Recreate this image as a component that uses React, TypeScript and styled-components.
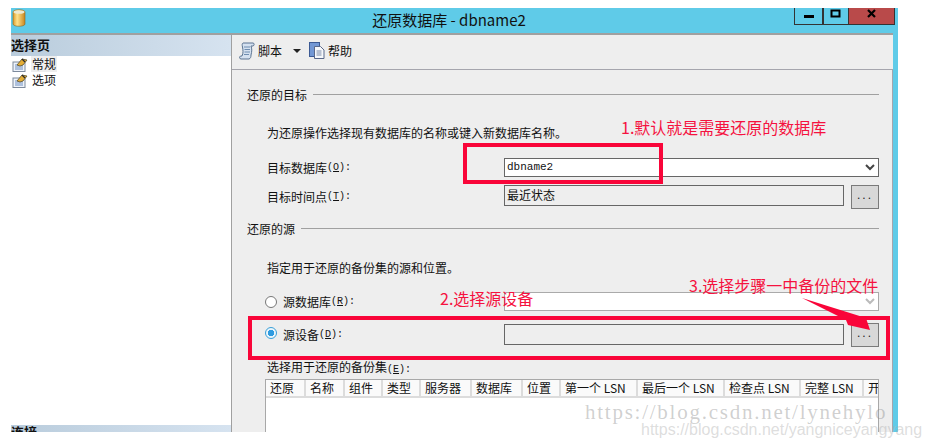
import React from "react";
import styled, { createGlobalStyle } from "styled-components";

const cjk = `"Noto Sans CJK SC", "Liberation Sans", sans-serif`;

const GlobalStyle = createGlobalStyle`
  html, body {
    margin: 0;
    padding: 0;
    background: #fff;
  }
  * {
    box-sizing: border-box;
  }
`;

const Page = styled.div`
  position: relative;
  width: 929px;
  height: 448px;
  overflow: hidden;
  padding: 8px 31px 16px 11px;
  font-family: ${cjk};
  font-size: 12px;
  color: #111;
`;

const Win = styled.div`
  display: flex;
  flex-direction: column;
  height: 100%;
  background: #5fcbe8;
  padding-right: 5px;
`;

const TitleBar = styled.div`
  position: relative;
  height: 25px;
  flex: none;
  display: flex;
  align-items: center;
  justify-content: center;
  padding: 0 6px 2px 0;
  font-size: 15px;
`;

const TitleIcon = styled.svg`
  position: absolute;
  left: 1px;
  top: 1px;
`;

const WinButtons = styled.div`
  position: absolute;
  right: -2px;
  top: 0;
  display: flex;
  height: 17px;
`;

const WinButton = styled.div<{ $w: number; $close?: boolean }>`
  width: ${(p) => p.$w}px;
  display: flex;
  align-items: flex-start;
  justify-content: center;
  border: 1px solid #333;
  border-top: none;
  border-left-width: ${(p) => (p.$close ? 0 : 1)}px;
  background: ${(p) => (p.$close ? "#b94a4a" : "transparent")};
`;

const Body = styled.div`
  flex: 1;
  min-height: 0;
  display: flex;
  border-top: 2px solid #a0a0a0;
  background: #eee;
`;

const Left = styled.div`
  width: 221px;
  flex: none;
  display: flex;
  flex-direction: column;
  background: #fff;
  border-right: 1px solid #a0a0a0;
`;

const SideHeader = styled.div<{ $clip?: boolean }>`
  height: ${(p) => (p.$clip ? 7 : 21)}px;
  flex: none;
  overflow: hidden;
  padding-top: ${(p) => (p.$clip ? 0 : 1)}px;
  font-size: 13px;
  line-height: ${(p) => (p.$clip ? 14 : 18)}px;
  font-weight: 700;
  background: linear-gradient(90deg, #b9ccdc, #d6e3f0);
`;

const Tree = styled.div`
  flex: 1;
`;

const TreeRow = styled.div`
  height: 16px;
  display: flex;
  align-items: center;
  padding-left: 1px;
  gap: 3px;
`;

const TreeText = styled.span<{ $sel?: boolean }>`
  padding: 0 1px;
  line-height: 16px;
  background: ${(p) => (p.$sel ? "#eeeeee" : "transparent")};
`;

const Right = styled.div`
  flex: 1;
  min-width: 0;
  display: flex;
  flex-direction: column;
`;

const Toolbar = styled.div`
  height: 35px;
  flex: none;
  display: flex;
  align-items: center;
  padding: 0 0 3px 7px;
  border-bottom: 1px solid #a5a5ad;
`;

const ToolItem = styled.span`
  display: flex;
  align-items: center;
  gap: 3px;
`;

const Caret = styled.i`
  width: 0;
  height: 0;
  margin: 1px 8px 0 11px;
  border: 4px solid transparent;
  border-top: 4px solid #222;
  border-bottom: none;
`;

const Form = styled.div`
  flex: 1;
  min-height: 0;
  overflow: hidden;
  padding: 15px 13px 0 15px;
  border-right: 1px solid #a5a5ad;
`;

const Section = styled.div<{ $top: number }>`
  display: flex;
  align-items: center;
  gap: 6px;
  height: 18px;
  margin-top: ${(p) => p.$top}px;
  &::after {
    content: "";
    flex: 1;
    height: 1px;
    background: #a0a0a0;
  }
`;

const Hint = styled.div<{ $top: number }>`
  margin: ${(p) => p.$top}px 0 0 20px;
  height: 16px;
  line-height: 16px;
`;

const Row = styled.div<{ $top: number; $h: number }>`
  display: flex;
  align-items: flex-start;
  height: ${(p) => p.$h}px;
  margin-top: ${(p) => p.$top}px;
  padding-left: 20px;
`;

const Label = styled.label<{ $w?: number; $pad?: number }>`
  flex: none;
  width: ${(p) => p.$w ?? 237}px;
  height: 19px;
  margin-top: ${(p) => p.$pad ?? 0}px;
  display: flex;
  align-items: center;
`;

const Mono = styled.span`
  font-family: "Liberation Mono", monospace;
  font-size: 11px;
`;

const Hotkey = styled.span`
  font-family: "Liberation Mono", monospace;
  font-size: 10px;
  white-space: pre;
  & > u {
    text-decoration: underline;
  }
`;

const Field = styled.div<{ $h: number; $bg: string; $light?: boolean; $pad?: number }>`
  flex: 1;
  min-width: 0;
  height: ${(p) => p.$h}px;
  margin-top: ${(p) => p.$pad ?? 0}px;
  display: flex;
  align-items: center;
  justify-content: space-between;
  padding: 0 1px 2px 2px;
  background: ${(p) => p.$bg};
  border: 1px solid ${(p) => (p.$light ? "#aaa" : "#666")};
`;

const Chevron = styled.svg`
  flex: none;
  margin: 2px 2px 0 0;
`;

const Browse = styled.button`
  flex: none;
  width: 28px;
  height: 24px;
  margin-left: 7px;
  padding: 0 0 4px;
  border: 1px solid #7a7a7a;
  background: #d8d8d8;
  font-family: "Liberation Sans", sans-serif;
  font-size: 12px;
  letter-spacing: 2px;
  color: #222;
`;

const Radio = styled.span<{ $on?: boolean }>`
  flex: none;
  width: 12px;
  height: 12px;
  margin: 4px 6px 0 -2px;
  border-radius: 50%;
  border: 1px solid ${(p) => (p.$on ? "#3a9fd8" : "#777")};
  background: ${(p) =>
    p.$on ? "radial-gradient(circle, #2f9be0 0 3px, #eaf5fb 3.5px)" : "#fff"};
`;

const Grid = styled.div`
  margin: 4px 0 0 18px;
  height: 53px;
  background: #fff;
  border: 1px solid #a8a8a8;
  border-bottom: none;
  overflow: hidden;
`;

const GridHead = styled.div`
  display: flex;
  height: 18px;
  border-bottom: 2px solid #dcdcdc;
  background: #fafafa;
`;

const GridCol = styled.div<{ $w: number }>`
  flex: none;
  width: ${(p) => p.$w}px;
  padding-left: 4px;
  line-height: 16px;
  white-space: nowrap;
  overflow: hidden;
  border-right: 2px solid #dcdcdc;
  &:last-child {
    border-right: none;
  }
`;

const RedBox = styled.div<{ $x: number; $y: number; $w: number; $h: number }>`
  position: absolute;
  left: ${(p) => p.$x}px;
  top: ${(p) => p.$y}px;
  width: ${(p) => p.$w}px;
  height: ${(p) => p.$h}px;
  border: 4px solid #f90539;
`;

const Note = styled.div<{ $x: number; $y: number }>`
  position: absolute;
  left: ${(p) => p.$x}px;
  top: ${(p) => p.$y}px;
  font-size: 16px;
  line-height: 20px;
  color: #f5123f;
  white-space: nowrap;
`;

const Arrow = styled.svg`
  position: absolute;
  left: 798px;
  top: 294px;
`;

const Mark = styled.div<{ $x: number; $y: number; $sans?: boolean }>`
  position: absolute;
  left: ${(p) => p.$x}px;
  top: ${(p) => p.$y}px;
  font-family: ${(p) =>
    p.$sans ? `"Liberation Sans", sans-serif` : `"Liberation Serif", serif`};
  font-size: ${(p) => (p.$sans ? 16 : 21)}px;
  letter-spacing: ${(p) => (p.$sans ? 0 : 1.75)}px;
  line-height: 18px;
  color: ${(p) => (p.$sans ? "rgba(180,180,180,.45)" : "rgba(130,130,130,.38)")};
  white-space: nowrap;
`;

const PageIcon = () => (
  <svg width="16" height="15" viewBox="0 0 16 15">
    <rect x="1" y="5" width="12" height="9.500" fill="#eef3fa" stroke="#7d8a9c" />
    <path d="M3 8h8M3 10h8M3 12h8" stroke="#6f8fc0" />
    <path d="M5 8 10 2l5 1-4 5-3 1z" fill="#e6ae35" stroke="#5c5330" strokeWidth=".8" />
    <path d="M10 2l3 3" stroke="#2b2b2b" strokeWidth="1.200" />
  </svg>
);

const ScriptIcon = () => (
  <svg width="16" height="18" viewBox="0 0 16 18">
    <path
      d="M4 1h10c1.500 0 1.500 2.500 0 3h-2c1 3 1 5 0 9 0 2-.5 3.500-2 4H2c-1.500 0-2-2-.5-3H3c1.500-3 1-6 .5-9C3 3 3 1.500 4 1z"
      fill="#d5e1f0"
      stroke="#5a7391"
    />
    <path d="M5 5h6M5.500 7.500h5.500M5.500 10h5.500M5 12.500h5" stroke="#6f8db0" />
  </svg>
);

const HelpIcon = () => (
  <svg width="16" height="17" viewBox="0 0 16 17">
    <rect x=".5" y=".5" width="10" height="14" fill="#7297d4" stroke="#3c5a94" />
    <path d="M5.500 4.500h6l3.500 3.500v8.500H5.500z" fill="#f6f8fb" stroke="#59688a" />
    <path d="M7.500 9h5M7.500 11h5M7.500 13h5" stroke="#7b8aa8" />
  </svg>
);

const columns: [string, number][] = [
  ["还原", 40],
  ["名称", 39],
  ["组件", 38],
  ["类型", 38],
  ["服务器", 51],
  ["数据库", 51],
  ["位置", 38],
  ["第一个 LSN", 77],
  ["最后一个 LSN", 87],
  ["检查点 LSN", 76],
  ["完整 LSN", 63],
  ["开", 20],
];

const App: React.FC = () => (
  <Page>
    <GlobalStyle />
    <Win>
      <TitleBar>
        <TitleIcon width="14" height="18" viewBox="0 0 14 18">
          <defs>
            <linearGradient id="dbBody" x1="0" x2="1" y1="0" y2="0">
              <stop offset="0" stopColor="#d99a2b" />
              <stop offset="0.35" stopColor="#ffe28a" />
              <stop offset="1" stopColor="#c9851d" />
            </linearGradient>
          </defs>
          <path
            d="M1 3c0-3 12-3 12 0v12c0 3-12 3-12 0z"
            fill="url(#dbBody)"
            stroke="#8a6a22"
            strokeWidth=".6"
          />
          <ellipse cx="7" cy="3" rx="5.500" ry="1.800" fill="#efe9cf" />
        </TitleIcon>
        还原数据库 - dbname2
        <WinButtons>
          <WinButton $w={29}>
            <svg width="12" height="14" viewBox="0 0 12 14">
              <rect x="1" y="7" width="10" height="3" fill="#000" />
            </svg>
          </WinButton>
          <WinButton $w={26}>
            <svg width="12" height="14" viewBox="0 0 12 14">
              <rect x="1.500" y="2.500" width="8" height="6" fill="none" stroke="#000" strokeWidth="2" />
            </svg>
          </WinButton>
          <WinButton $w={46} $close>
            <svg width="12" height="14" viewBox="0 0 12 14">
              <path d="M2 2l7 7M9 2 2 9" stroke="#000" strokeWidth="2.200" />
            </svg>
          </WinButton>
        </WinButtons>
      </TitleBar>
      <Body>
        <Left>
          <SideHeader>选择页</SideHeader>
          <Tree>
            <TreeRow>
              <PageIcon />
              <TreeText $sel>常规</TreeText>
            </TreeRow>
            <TreeRow>
              <PageIcon />
              <TreeText>选项</TreeText>
            </TreeRow>
          </Tree>
          <SideHeader $clip>连接</SideHeader>
        </Left>
        <Right>
          <Toolbar>
            <ToolItem>
              <ScriptIcon />
              脚本
            </ToolItem>
            <Caret />
            <ToolItem>
              <HelpIcon />
              帮助
            </ToolItem>
          </Toolbar>
          <Form>
            <Section $top={0}>还原的目标</Section>
            <Hint $top={22}>为还原操作选择现有数据库的名称或键入新数据库名称。</Hint>
            <Row $top={17} $h={19}>
              <Label>
                目标数据库
                <Hotkey>
                  (<u>O</u>):
                </Hotkey>
              </Label>
              <Field $h={19} $bg="#fff">
                <Mono>dbname2</Mono>
                <Chevron width="10" height="7" viewBox="0 0 10 7">
                  <path d="M1 1l4 4 4-4" fill="none" stroke="#444" strokeWidth="2" />
                </Chevron>
              </Field>
            </Row>
            <Row $top={8} $h={24}>
              <Label $pad={2}>
                目标时间点
                <Hotkey>
                  (<u>T</u>):
                </Hotkey>
              </Label>
              <Field $h={21} $bg="#eee">最近状态</Field>
              <Browse>...</Browse>
            </Row>
            <Section $top={10}>还原的源</Section>
            <Hint $top={23}>指定用于还原的备份集的源和位置。</Hint>
            <Row $top={16} $h={19}>
              <Radio />
              <Label $w={221}>
                源数据库
                <Hotkey>
                  (<u>R</u>):
                </Hotkey>
              </Label>
              <Field $h={19} $bg="#fff" $light>
                <span />
                <Chevron width="10" height="7" viewBox="0 0 10 7">
                  <path d="M1 1l4 4 4-4" fill="none" stroke="#bbb" strokeWidth="2" />
                </Chevron>
              </Field>
            </Row>
            <Row $top={12} $h={25}>
              <Radio $on />
              <Label $w={221} $pad={2}>
                源设备
                <Hotkey>
                  (<u>D</u>):
                </Hotkey>
              </Label>
              <Field $h={21} $bg="#eee" $pad={1} />
              <Browse>...</Browse>
            </Row>
            <Hint $top={11}>
              选择用于还原的备份集
              <Hotkey>
                (<u>E</u>):
              </Hotkey>
            </Hint>
            <Grid>
              <GridHead>
                {columns.map(([name, w]) => (
                  <GridCol key={name} $w={w}>
                    {name}
                  </GridCol>
                ))}
              </GridHead>
            </Grid>
          </Form>
        </Right>
      </Body>
    </Win>

    <RedBox $x={463} $y={143} $w={200} $h={41} />
    <RedBox $x={248} $y={316} $w={642} $h={44} />
    <Note $x={621} $y={117}>1.默认就是需要还原的数据库</Note>
    <Note $x={440} $y={288}>2.选择源设备</Note>
    <Note $x={689} $y={275}>3.选择步骤一中备份的文件</Note>
    <Arrow width="76" height="40" viewBox="0 0 76 40">
      <path d="M4 4 68 24 72 36 50 31 48 26z" fill="#f90539" />
    </Arrow>
    <Mark $x={585} $y={403}>https://blog.csdn.net/lynehylo</Mark>
    <Mark $x={641} $y={421} $sans>https://blog.csdn.net/yangniceyangyang</Mark>
  </Page>
);

export default App;
